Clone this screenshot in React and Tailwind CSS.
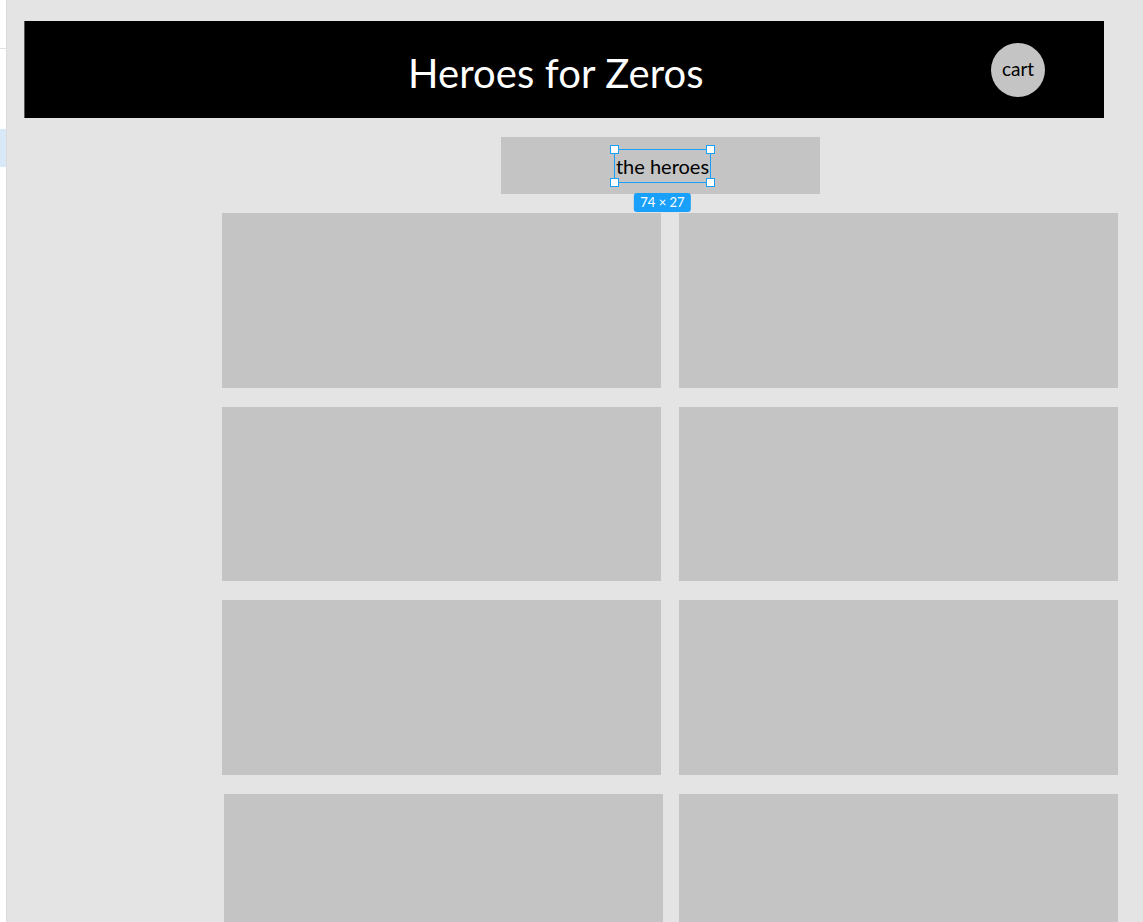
import React from "react";

const cards = [0, 1, 2, 3, 4, 5, 6, 7];

const Handle = ({ className }) => (
  <span
    className={`absolute w-[9px] h-[9px] bg-white border border-[#18a0fb] ${className}`}
  />
);

const App = () => {
  return (
    <div
      className="flex h-[922px] w-[1143px] overflow-hidden bg-[#e4e4e4]"
      style={{ fontFamily: "Lato, 'Noto Sans', sans-serif" }}
    >
      {/* Left strip */}
      <div className="w-[7px] shrink-0 bg-white border-r border-[#dcdcdc] flex flex-col">
        <div className="h-[49px] border-b border-[#e2e2e2]" />
        <div className="mt-[80px] h-[38px] bg-[#d9e8f6]" />
      </div>

      {/* Main canvas */}
      <div className="flex-1 pt-[21px]">
        {/* Header */}
        <div className="ml-[17px] w-[1080px] h-[97px] bg-black flex items-center border-l border-[#555]">
          <h1 className="ml-[383px] mt-[7px] text-white text-[40px] leading-none tracking-[0.1px]">
            Heroes for Zeros
          </h1>
          <div className="ml-auto mr-[59px] mt-[0px] w-[54px] h-[54px] rounded-full bg-[#c4c4c4] flex items-center justify-center text-[19px] text-black">
            cart
          </div>
        </div>

        {/* Section title */}
        <div className="ml-[494px] mt-[19px] w-[319px] h-[57px] bg-[#c4c4c4] flex items-center justify-center">
          <div className="relative ml-[4px] px-[1px] border border-[#18a0fb] h-[34px] flex items-center">
            <span className="text-[20px] text-black leading-none">the heroes</span>
            <Handle className="-left-[5px] -top-[5px]" />
            <Handle className="-right-[5px] -top-[5px]" />
            <Handle className="-left-[5px] -bottom-[5px]" />
            <Handle className="-right-[5px] -bottom-[5px]" />
            <span className="absolute left-1/2 -translate-x-1/2 top-[43px] px-[6px] h-[19px] rounded-[3px] bg-[#18a0fb] text-white text-[13px] leading-[19px] whitespace-nowrap">
              74 × 27
            </span>
          </div>
        </div>

        {/* Cards */}
        <div className="ml-[215px] mt-[19px] w-[896px] grid grid-cols-[439px_439px] gap-x-[18px] gap-y-[19px]">
          {cards.map((i) => (
            <div
              key={i}
              className={`h-[174.5px] bg-[#c4c4c4] ${i === 6 ? "translate-x-[2px]" : ""}`}
            />
          ))}
        </div>
      </div>
    </div>
  );
};

export default App;
